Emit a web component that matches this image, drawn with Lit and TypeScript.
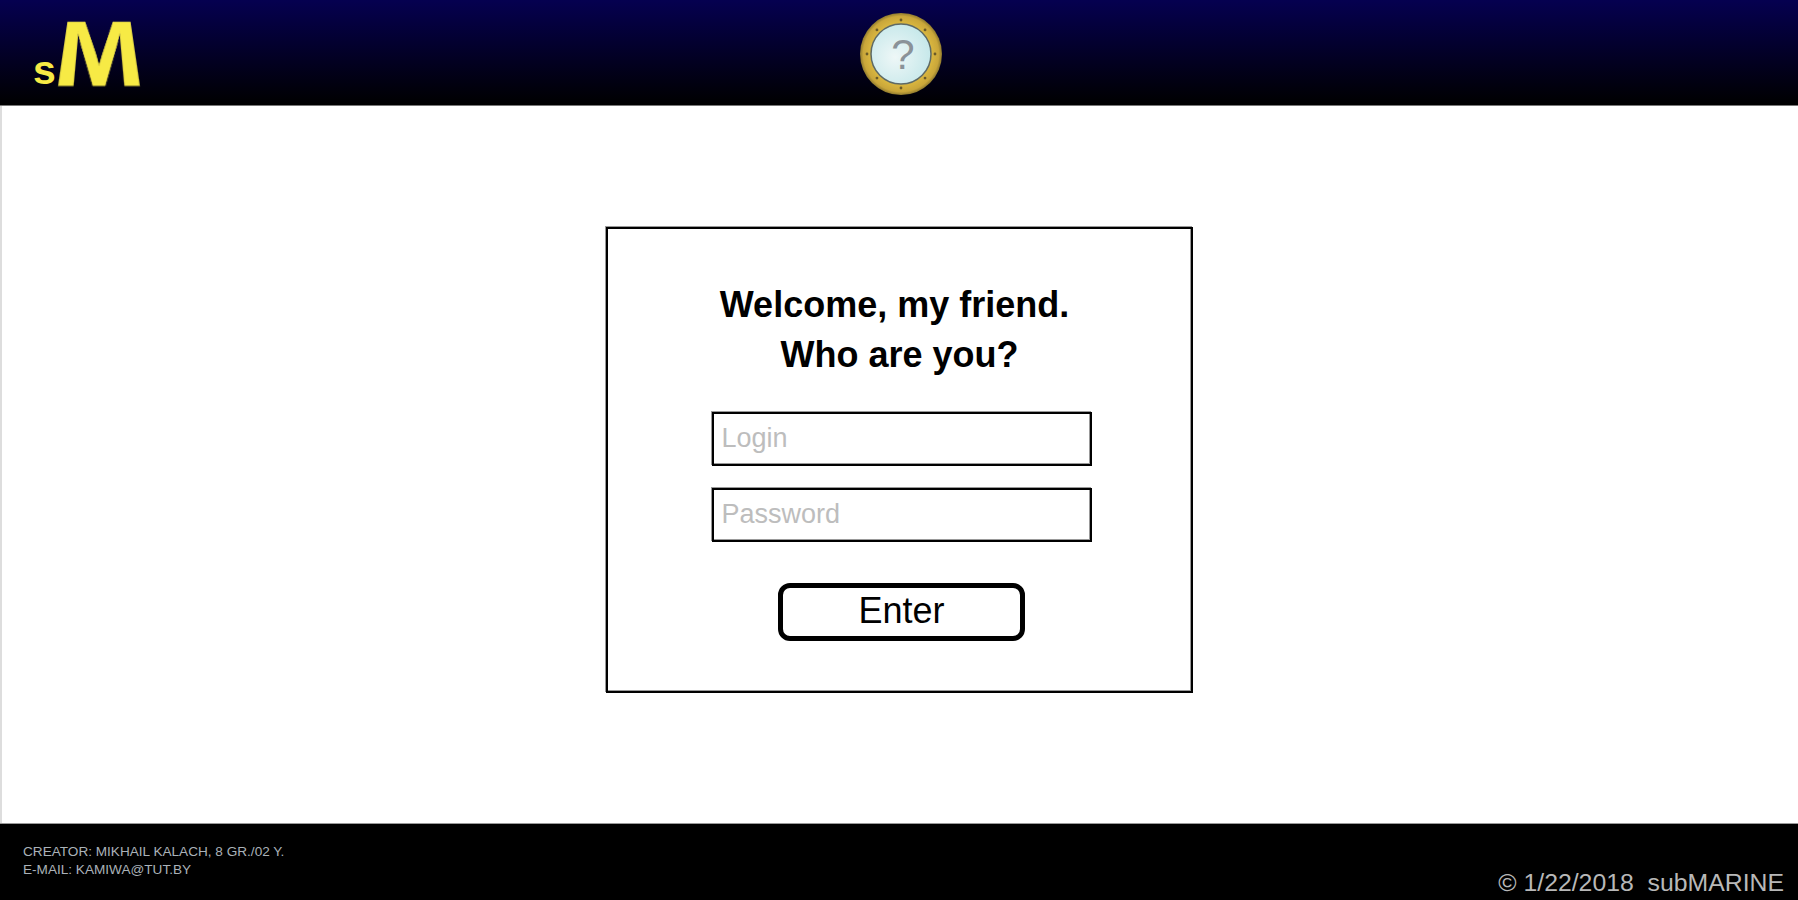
import { LitElement, html, css, svg } from "lit";
import { customElement } from "lit/decorators.js";

const rivets = [0, 45, 90, 135, 180, 225, 270, 315].map((a) => {
  const r = (a * Math.PI) / 180;
  return svg`<circle cx=${41 + 34 * Math.sin(r)} cy=${41 - 34 * Math.cos(r)} r="1.4" fill="#6a5a28" />`;
});

@customElement("app-root")
export class AppRoot extends LitElement {
  static styles = css`
    :host {
      display: flex;
      flex-direction: column;
      height: 900px;
      font-family: "Liberation Sans", Arial, sans-serif;
      color: #000;
      background: #fff;
    }
    header {
      flex: 0 0 106px;
      height: 106px;
      box-sizing: border-box;
      border-bottom: 1px solid #777;
      background: linear-gradient(#050050, #000);
      display: grid;
      grid-template-columns: 1fr auto 1fr;
      align-items: center;
    }
    .logo {
      display: flex;
      align-items: baseline;
      height: 105px;
      padding-left: 33px;
      color: #f7ea45;
      font-weight: 700;
      line-height: 101px;
    }
    .logo .s { font-size: 41px; }
    .logo .m {
      display: inline-block;
      font-size: 96px;
      margin-left: 3.5px;
      transform: translateY(-1px) perspective(89px) rotateX(20deg) scaleX(1.05);
      -webkit-text-stroke: 0.6px #f7ea45;
    }
    .port { display: block; margin: 2px 0 0 4px; }
    main {
      flex: 1;
      box-sizing: border-box;
      border-left: 2px solid #ddd;
      display: flex;
      align-items: flex-start;
      justify-content: center;
      padding: 121px 1px 0 0;
    }
    .card {
      box-sizing: border-box;
      width: 587px;
      height: 466px;
      border: 2px solid #000;
      box-shadow: -1px -1px 0 #999, inset -1px -1px 0 #999;
      display: flex;
      flex-direction: column;
      align-items: center;
      padding-top: 51px;
    }
    h1 {
      margin: 0 0 32px;
      font-size: 36px;
      line-height: 50px;
      font-weight: 700;
      text-align: center;
    }
    input {
      box-sizing: border-box;
      display: block;
      width: 380px;
      height: 54px;
      border: 2px solid #000;
      box-shadow: -1px -1px 0 #999, inset -1px -1px 0 #999;
      padding: 0 8px 2px;
      margin: 0 0 22px 4px;
      font: 27px "Liberation Sans", Arial, sans-serif;
      outline: none;
      border-radius: 0;
    }
    input::placeholder { color: #bdbdbd; opacity: 1; }
    button {
      box-sizing: border-box;
      width: 247px;
      height: 58px;
      margin: 19px 0 0 4px;
      border: 5px solid #000;
      border-radius: 12px;
      background: #fff;
      color: #000;
      font: 36px "Liberation Sans", Arial, sans-serif;
      padding: 0 0 3px;
    }
    footer {
      flex: 0 0 77px;
      box-sizing: border-box;
      height: 77px;
      border-top: 1px solid #999;
      background: #000;
      color: #b8b8b8;
      display: flex;
      justify-content: space-between;
      align-items: flex-end;
    }
    .info {
      align-self: flex-start;
      margin: 19px 0 0 23px;
      font-size: 13.6px;
      line-height: 18px;
      color: #aab2b8;
    }
    .copy {
      font-size: 24.8px;
      line-height: 30px;
      margin: 0 14px 2px 0;
      white-space: pre;
    }
  `;

  render() {
    return html`
      <header>
        <div class="logo"><span class="s">s</span><span class="m">M</span></div>
        <svg class="port" width="82" height="82" viewBox="0 0 82 82" role="img" aria-label="?">
          <defs>
            <radialGradient id="brass" cx="50%" cy="50%" r="50%">
              <stop offset="0.75" stop-color="#d9b63f" />
              <stop offset="0.92" stop-color="#c9a63a" />
              <stop offset="1" stop-color="#8f7a2e" />
            </radialGradient>
            <radialGradient id="glass" cx="40%" cy="55%" r="60%">
              <stop offset="0" stop-color="#eef7f7" />
              <stop offset="1" stop-color="#c6e8ea" />
            </radialGradient>
          </defs>
          <circle cx="41" cy="41" r="41" fill="url(#brass)" />
          <circle cx="41" cy="41" r="30" fill="url(#glass)" stroke="#5e6a66" stroke-width="1.5" />
          ${rivets}
          <text x="43" y="56" text-anchor="middle" font-size="42" fill="#8a9298" font-family="Liberation Sans">?</text>
        </svg>
        <div></div>
      </header>
      <main>
        <div class="card">
          <h1>Welcome, my friend.&nbsp;<br />Who are you?</h1>
          <input type="text" placeholder="Login" />
          <input type="password" placeholder="Password" />
          <button>Enter</button>
        </div>
      </main>
      <footer>
        <div class="info">CREATOR: MIKHAIL KALACH, 8 GR./02 Y.<br />E-MAIL: KAMIWA@TUT.BY</div>
        <div class="copy">© 1/22/2018  subMARINE</div>
      </footer>
    `;
  }
}
